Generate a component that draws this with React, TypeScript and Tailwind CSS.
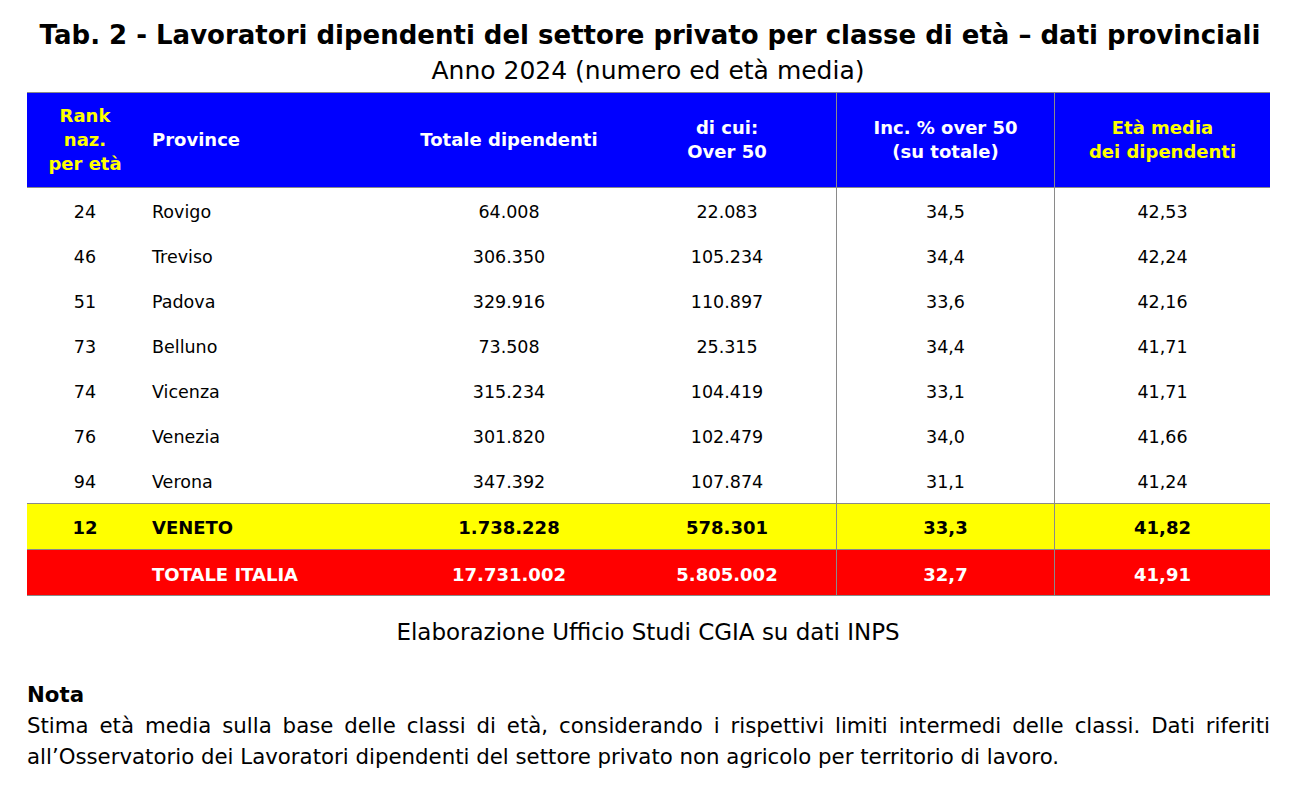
import React from "react";

const rows = [
  ["24", "Rovigo", "64.008", "22.083", "34,5", "42,53"],
  ["46", "Treviso", "306.350", "105.234", "34,4", "42,24"],
  ["51", "Padova", "329.916", "110.897", "33,6", "42,16"],
  ["73", "Belluno", "73.508", "25.315", "34,4", "41,71"],
  ["74", "Vicenza", "315.234", "104.419", "33,1", "41,71"],
  ["76", "Venezia", "301.820", "102.479", "34,0", "41,66"],
  ["94", "Verona", "347.392", "107.874", "31,1", "41,24"],
];

const cols = "grid grid-cols-[116px_257px_218px_218px_218px_216px]";
const font = { fontFamily: '"DejaVu Sans", sans-serif' };

export default function App() {
  return (
    <div className="w-[1296px] h-[793px] bg-white text-black overflow-hidden" style={font}>
      <div className="pt-[19px] text-center">
        <div className="text-[26px] font-bold leading-[32px] pl-[4px]">
          Tab. 2 - Lavoratori dipendenti del settore privato per classe di età – dati provinciali
        </div>
        <div className="text-[25px] leading-[30px] mt-[5px]">Anno 2024 (numero ed età media)</div>
      </div>

      <div className="ml-[27px] w-[1243px] mt-[6px]">
        {/* header */}
        <div className={`${cols} h-[96px] bg-[#0000ff] border-y border-[#8a8a8a] font-bold text-[18px] leading-[24px] text-white`}>
          <div className="flex items-center justify-center text-center text-[#ffff00]">
            Rank<br />naz.<br />per età
          </div>
          <div className="flex items-center pl-[9px]">Province</div>
          <div className="flex items-center justify-center">Totale dipendenti</div>
          <div className="flex items-center justify-center text-center">
            di cui:<br />Over 50
          </div>
          <div className="flex items-center justify-center text-center border-l border-[#8a8a8a]">
            Inc. % over 50<br />(su totale)
          </div>
          <div className="flex items-center justify-center text-center text-[#ffff00] border-l border-[#8a8a8a]">
            Età media<br />dei dipendenti
          </div>
        </div>

        {/* body rows */}
        {rows.map((r, i) => (
          <div key={i} className={`${cols} h-[45px] text-[17.5px]`}>
            <div className="flex items-center justify-center pt-[4px]">{r[0]}</div>
            <div className="flex items-center pl-[9px] pt-[4px]">{r[1]}</div>
            <div className="flex items-center justify-center pt-[4px]">{r[2]}</div>
            <div className="flex items-center justify-center pt-[4px]">{r[3]}</div>
            <div className="flex items-center justify-center border-l border-[#8a8a8a] pt-[4px]">{r[4]}</div>
            <div className="flex items-center justify-center border-l border-[#8a8a8a] pt-[4px]">{r[5]}</div>
          </div>
        ))}

        {/* Veneto */}
        <div className={`${cols} h-[46px] bg-[#ffff00] border-t border-[#8a8a8a] font-bold text-[18px]`}>
          <div className="flex items-center justify-center pt-[2px]">12</div>
          <div className="flex items-center pl-[9px] pt-[2px]">VENETO</div>
          <div className="flex items-center justify-center pt-[2px]">1.738.228</div>
          <div className="flex items-center justify-center pt-[2px]">578.301</div>
          <div className="flex items-center justify-center border-l border-[#8a8a8a] pt-[2px]">33,3</div>
          <div className="flex items-center justify-center border-l border-[#8a8a8a] pt-[2px]">41,82</div>
        </div>

        {/* Italia */}
        <div className={`${cols} h-[47px] bg-[#ff0000] border-y border-[#8a8a8a] font-bold text-[18px] text-white`}>
          <div className="flex items-center justify-center pt-[4px]"></div>
          <div className="flex items-center pl-[9px] pt-[4px]">TOTALE ITALIA</div>
          <div className="flex items-center justify-center pt-[4px]">17.731.002</div>
          <div className="flex items-center justify-center pt-[4px]">5.805.002</div>
          <div className="flex items-center justify-center border-l border-[#8a8a8a] pt-[4px]">32,7</div>
          <div className="flex items-center justify-center border-l border-[#8a8a8a] pt-[4px]">41,91</div>
        </div>
      </div>

      <div className="text-center text-[23px] leading-[30px] mt-[21px]">
        Elaborazione Ufficio Studi CGIA su dati INPS
      </div>

      <div className="ml-[27px] w-[1243px] mt-[32px] text-[21.3px] leading-[31px]">
        <div className="font-bold">Nota</div>
        <p className="text-justify">
          Stima età media sulla base delle classi di età, considerando i rispettivi limiti intermedi delle classi. Dati riferiti all’Osservatorio dei Lavoratori dipendenti del settore privato non agricolo per territorio di lavoro.
        </p>
      </div>
    </div>
  );
}
